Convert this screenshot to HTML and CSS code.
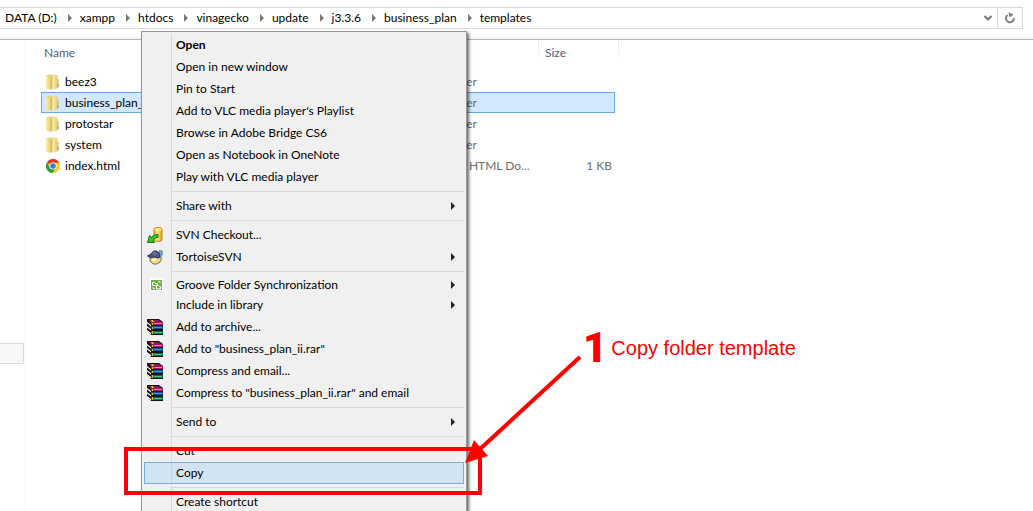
FILE: index.html
```
<!DOCTYPE html>
<html lang="en">
  <head>
    <meta charset="UTF-8" />
    <meta name="viewport" content="width=device-width, initial-scale=1.0" />
    <title>templates</title>
    <link rel="stylesheet" href="styles.css">
  </head>
  <body>
    <!-- Shared icons -->
    <svg class="sprite" aria-hidden="true">
      <defs>
        <linearGradient id="folder-front" x1="0" y1="0" x2="1" y2="0">
          <stop offset="0" stop-color="#fbf0b4" />
          <stop offset="1" stop-color="#e3c968" />
        </linearGradient>
        <linearGradient id="db" x1="0" y1="0" x2="1" y2="0">
          <stop offset="0" stop-color="#eaa01c" />
          <stop offset="0.4" stop-color="#ffeb8a" />
          <stop offset="1" stop-color="#e8980c" />
        </linearGradient>
      </defs>
      <symbol id="folder" viewBox="0 0 16 16">
        <path d="M1 1.500 5 .5 6.500 1v14l-5-1z" fill="#e0c767" />
        <path d="M5 .5h6.500v13.500H5z" fill="#f0e09a" />
        <path d="M1 1.500 6 2.500v13.500l-5-1.500z" fill="url(#folder-front)" />
        <path d="M6 2.500 7.500 1.500v13L6 16z" fill="#d8bb58" />
        <path d="M7.500 2.500 12.500 1.500v13l-5 1.500z" fill="url(#folder-front)" />
        <path d="M12.500 5h1v8.500h-1z" fill="#cfaf4f" />
        <path d="M12.500 10h1v3h-1z" fill="#58a9c9" />
      </symbol>
      <symbol id="chrome" viewBox="0 0 16 16">
        <circle cx="8" cy="8" r="7" fill="#fbce1d" />
        <path d="M8 8 1.900 4.500A7 7 0 0 1 14.200 4.700H8z" fill="#db3a2b" />
        <path d="M1.900 4.500A7 7 0 0 0 7.500 15L10.900 9.700 8 11.300 5.100 9.700z" fill="#2d9c47" />
        <circle cx="8" cy="8" r="3.600" fill="#fff" />
        <circle cx="8" cy="8" r="2.800" fill="#3c7fd0" />
      </symbol>
      <symbol id="books" viewBox="0 0 16 16">
        <path d="M0 0h12l4 3v13H4L0 12z" fill="#1a1014" />
        <path d="M1 1h10l4 2H4z" fill="#8c1850" />
        <path d="M4 1h2l1 2H5z" fill="#e5c01c" />
        <path d="M4 3h12v3H4z" fill="#a8145e" />
        <path d="M7 4h8v1H7z" fill="#f07cc0" />
        <path d="M4 7h12v3H4z" fill="#0f4f9c" />
        <path d="M7 8h8v1H7z" fill="#3f9ae6" />
        <path d="M4 12h12v3H4z" fill="#08704e" />
        <path d="M7 13h8v1H7z" fill="#42cc98" />
        <path d="M5 4h1v2H5zM5 8h1v2H5zM5 12h1v3H5z" fill="#e5c01c" />
        <path d="M0 3 4 6v1.500L0 4.500zM0 7l4 3v1.500L0 8.500zM0 11l4 3v1.500l-4-3z" fill="#fff" />
      </symbol>
    </svg>

    <header class="toolbar">
      <div class="address-bar">
        <nav class="breadcrumb" aria-label="Path">
          <a href="#">DATA (D:)</a>
          <a href="#">xampp</a>
          <a href="#">htdocs</a>
          <a href="#">vinagecko</a>
          <a href="#">update</a>
          <a href="#">j3.3.6</a>
          <a href="#">business_plan</a>
          <a href="#">templates</a>
        </nav>
        <button class="history-btn" type="button" aria-label="Previous locations">
          <svg width="8" height="6" viewBox="0 0 8 6"><path d="M.5 1 4 4.500 7.500 1" fill="none" stroke="#777" stroke-width="2" /></svg>
        </button>
        <button class="refresh-btn" type="button" aria-label="Refresh">
          <svg width="12" height="12" viewBox="0 0 12 12">
            <path d="M3.500 3A4 4 0 1 0 9.900 6" fill="none" stroke="#808080" stroke-width="2" />
            <path d="M5 0v5.500L9.500 3z" fill="#808080" transform="rotate(-8 6 3)" />
          </svg>
        </button>
      </div>
    </header>

    <main class="explorer">
      <aside class="nav-pane">
        <div class="nav-selected"></div>
      </aside>

      <section class="files">
        <table class="file-table">
          <thead>
            <tr>
              <th class="col-name">Name</th>
              <th class="col-type"></th>
              <th class="col-size">Size</th>
            </tr>
          </thead>
          <tbody>
            <tr>
              <td><div class="file-name"><svg class="icon"><use href="#folder" /></svg>beez3</div></td>
              <td class="type">File folder</td>
              <td class="size"></td>
            </tr>
            <tr class="selected">
              <td><div class="file-name"><svg class="icon"><use href="#folder" /></svg>business_plan_ii</div></td>
              <td class="type">File folder</td>
              <td class="size"></td>
            </tr>
            <tr>
              <td><div class="file-name"><svg class="icon"><use href="#folder" /></svg>protostar</div></td>
              <td class="type">File folder</td>
              <td class="size"></td>
            </tr>
            <tr>
              <td><div class="file-name"><svg class="icon"><use href="#folder" /></svg>system</div></td>
              <td class="type">File folder</td>
              <td class="size"></td>
            </tr>
            <tr>
              <td><div class="file-name"><svg class="icon"><use href="#chrome" /></svg>index.html</div></td>
              <td class="type">Chrome HTML Do...</td>
              <td class="size">1 KB</td>
            </tr>
          </tbody>
        </table>
      </section>
    </main>

    <!-- Context menu -->
    <div class="context-menu">
      <button class="menu-item default" type="button">Open</button>
      <button class="menu-item" type="button">Open in new window</button>
      <button class="menu-item" type="button">Pin to Start</button>
      <button class="menu-item" type="button">Add to VLC media player's Playlist</button>
      <button class="menu-item" type="button">Browse in Adobe Bridge CS6</button>
      <button class="menu-item" type="button">Open as Notebook in OneNote</button>
      <button class="menu-item" type="button">Play with VLC media player</button>
      <hr class="separator">
      <button class="menu-item submenu" type="button">Share with</button>
      <hr class="separator">
      <button class="menu-item" type="button">
        <svg class="menu-icon" viewBox="0 0 16 16">
          <path d="M7 2q0-1.500 4-1.500T15 2v11q0 1.500-4 1.500T7 13z" fill="url(#db)" stroke="#c98a1c" />
          <ellipse cx="11" cy="2.500" rx="3.500" ry="1.300" fill="#ffe9a0" />
          <path d="M11 7.500Q6 7 4.500 10.500L2.500 8.500.5 15.500h7L6 13q1-3 5-2.500z" fill="#38c428" stroke="#137a12" />
        </svg>
        SVN Checkout...
      </button>
      <button class="menu-item submenu" type="button">
        <svg class="menu-icon" viewBox="0 0 16 16">
          <path d="M3 7h10l1.500 3-1.500 3-3 2H6l-3-3z" fill="#ecd98c" stroke="#8b7439" />
          <path d="M12 7V4l.5-3 3 1v3l-2 4z" fill="#72a9c3" stroke="#4e7893" stroke-width=".6" />
          <path d="M.5 7 4 5q2-4 5-3 3 0 4 5l-1 2-5-1-3 1z" fill="#4e5386" stroke="#303354" />
          <path d="m5 5 3-2 3 3M7 3l1 4" fill="none" stroke="#858ab3" stroke-width=".7" />
          <path d="M5 10h4v2H5z" fill="#fff7ce" />
        </svg>
        TortoiseSVN
      </button>
      <hr class="separator">
      <div class="compact-group">
        <button class="menu-item submenu" type="button">
          <svg class="menu-icon" viewBox="0 0 16 16">
            <path d="M3 1h13v13H3z" fill="#fff" />
            <path d="M4 3h11v10H4z" fill="#70ae48" />
            <path d="M5.500 5.500h2l1 1h2v2h-5zM9.500 8.500h2l1 1h1v2.500h-4z" fill="#70ae48" stroke="#fff" />
            <path d="M11 4.500h2v2M6 10v1.500h2" fill="none" stroke="#d6ebc9" />
          </svg>
          Groove Folder Synchronization
        </button>
        <button class="menu-item submenu" type="button">Include in library</button>
      </div>
      <button class="menu-item" type="button"><svg class="menu-icon"><use href="#books" /></svg>Add to archive...</button>
      <button class="menu-item" type="button"><svg class="menu-icon"><use href="#books" /></svg>Add to "business_plan_ii.rar"</button>
      <button class="menu-item" type="button"><svg class="menu-icon"><use href="#books" /></svg>Compress and email...</button>
      <button class="menu-item" type="button"><svg class="menu-icon"><use href="#books" /></svg>Compress to "business_plan_ii.rar" and email</button>
      <hr class="separator">
      <button class="menu-item submenu" type="button">Send to</button>
      <hr class="separator">
      <button class="menu-item" type="button">Cut</button>
      <button class="menu-item active" type="button">Copy</button>
      <hr class="separator">
      <button class="menu-item" type="button">Create shortcut</button>
    </div>

    <!-- Step annotation -->
    <div class="highlight-box"></div>
    <svg class="arrow" width="120" height="112" viewBox="0 0 120 112" aria-hidden="true">
      <path d="M117 5 16 98" stroke="#f00" stroke-width="4" />
      <path d="M2 111 11 88 25 104z" fill="#f00" />
    </svg>
    <div class="step">
      <span class="step-number">1</span>
      <span class="step-text">Copy folder template</span>
    </div>
  </body>
</html>
```
FILE: styles.css
```
* {
  margin: 0;
  padding: 0;
  box-sizing: border-box;
}

body {
  position: relative;
  display: flex;
  flex-direction: column;
  height: 100vh;
  overflow: hidden;
  background-color: #fff;
  color: #000;
  font-family: 'Segoe UI', Lato, sans-serif;
  font-size: 12px;
  line-height: 20px;
}

button {
  border: none;
  background: none;
  color: inherit;
  font: inherit;
}

.sprite {
  position: absolute;
  width: 0;
  height: 0;
}

.toolbar {
  padding: 7px 10px 10px 0;
  border-bottom: 1px solid #b4b7b8;
  background: linear-gradient(#fff 36px, #f5f6f6);
}

.address-bar {
  display: flex;
  border: 1px solid #d9d9d9;
  border-left: none;
  background-color: #fff;
}

.breadcrumb {
  display: flex;
  flex: 1;
  padding-left: 5px;
}

.breadcrumb a {
  display: flex;
  align-items: center;
  color: #000;
  text-decoration: none;
}

.breadcrumb a:not(:last-child)::after {
  content: '';
  margin: 0 8px 0 11px;
  border: 4px solid transparent;
  border-left-color: #777;
  border-right: none;
}

.history-btn,
.refresh-btn {
  display: flex;
  align-items: center;
  justify-content: center;
  width: 18px;
}

.refresh-btn {
  width: 25px;
  border-left: 1px solid #d9d9d9;
}

.explorer {
  display: flex;
  flex: 1;
}

.nav-pane {
  width: 26px;
  padding: 303px 1px 0 0;
  border-right: 1px solid #f2f4f7;
}

.nav-selected {
  height: 21px;
  border: 1px solid #dadada;
  border-left: none;
  background-color: #f7f7f7;
}

.files {
  flex: 1;
  padding-left: 15px;
}

.file-table {
  width: 574px;
  table-layout: fixed;
  border-collapse: collapse;
}

.file-table th {
  position: relative;
  height: 31px;
  padding: 3px 0 8px 3px;
  color: #4c607a;
  font-weight: normal;
  text-align: left;
}

.file-table .col-name {
  width: 375px;
}

.file-table .col-type {
  width: 123px;
}

.file-table .col-size {
  width: 76px;
  padding-left: 6px;
}

/* Column dividers */
.file-table .col-type::after,
.file-table .col-size::after {
  content: '';
  position: absolute;
  top: 0;
  right: 0;
  width: 1px;
  height: 21px;
  background: linear-gradient(#dfe6ee, #fff);
}

.file-table .col-size::after {
  right: -4px;
}

.file-table td {
  height: 21px;
  padding-top: 1px;
}

.file-name {
  display: flex;
  align-items: center;
  gap: 4px;
  padding-left: 4px;
}

.icon {
  width: 16px;
  height: 16px;
}

.file-table .type,
.file-table .size {
  color: #6d6d6d;
}

.file-table .type {
  padding-left: 8px;
}

.file-table .size {
  padding-right: 3px;
  text-align: right;
}

.file-table .selected {
  background-color: #d1e8ff;
  outline: 1px solid #66a7e8;
  outline-offset: -1px;
}

.context-menu {
  position: absolute;
  top: 31px;
  left: 141px;
  width: 326px;
  padding: 2px;
  border: 1px solid #979797;
  background: linear-gradient(#d9d9d9, #d9d9d9) no-repeat 29px 2px / 1px 100% #f0f0f0;
  box-shadow: 2px 2px 3px rgba(0, 0, 0, 0.6);
}

.menu-item {
  position: relative;
  display: flex;
  align-items: center;
  width: 100%;
  height: 22px;
  padding-left: 32px;
  white-space: nowrap;
}

.menu-item.default {
  font-weight: bold;
}

.menu-item.active {
  box-shadow: inset 0 0 0 1px #78aee5;
  background-color: rgba(174, 211, 245, 0.45);
}

.menu-item.submenu::after {
  content: '';
  margin: 0 9px 0 auto;
  border: 4px solid transparent;
  border-left-color: #222;
  border-right: none;
}

.menu-icon {
  width: 16px;
  height: 16px;
  margin: 0 13px 0 -29px;
}

.compact-group {
  padding-bottom: 1px;
}

.compact-group .menu-item {
  height: 20px;
}

.separator {
  margin: 3px 0 3px 28px;
  border: none;
  border-top: 1px solid #d9d9d9;
}

.highlight-box {
  position: absolute;
  top: 447px;
  left: 124px;
  width: 358px;
  height: 48px;
  border: 4px solid #f00;
}

.arrow {
  position: absolute;
  top: 352px;
  left: 463px;
}

.step {
  position: absolute;
  top: 328px;
  left: 583px;
  display: flex;
  align-items: center;
  gap: 4px;
  height: 40px;
  color: #f00;
}

.step-number {
  font-family: Roboto, sans-serif;
  font-size: 42px;
  font-weight: 900;
}

.step-text {
  font-family: 'Liberation Sans', Arial, sans-serif;
  font-size: 20px;
}
```
